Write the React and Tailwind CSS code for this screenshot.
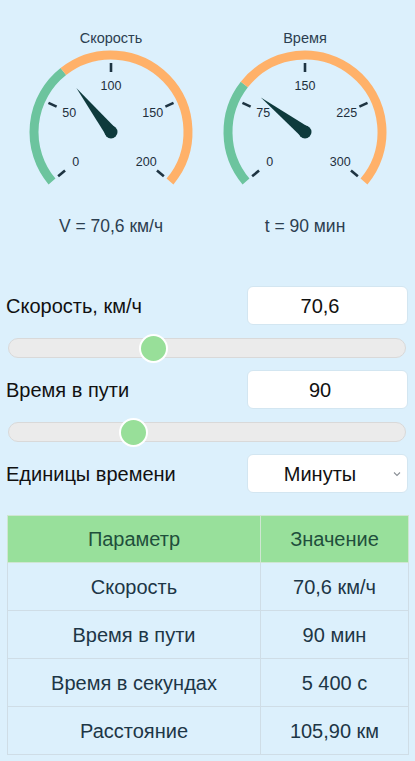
import React from 'react';

// helpers for the dial geometry (angles measured from 12 o'clock, clockwise)
const polar = (cx, cy, r, deg) => {
  const a = (deg * Math.PI) / 180;
  return [cx + r * Math.sin(a), cy - r * Math.cos(a)];
};

const arcPath = (cx, cy, r, a0, a1) => {
  const [x0, y0] = polar(cx, cy, r, a0);
  const [x1, y1] = polar(cx, cy, r, a1);
  const large = a1 - a0 > 180 ? 1 : 0;
  return `M ${x0} ${y0} A ${r} ${r} 0 ${large} 1 ${x1} ${y1}`;
};

const START = -130;
const SPAN = 260;

const Gauge = ({ title, value, max, caption }) => {
  const cx = 97;
  const cy = 86;
  const angle = START + (Math.min(value, max) / max) * SPAN;
  const ticks = [0, 1, 2, 3, 4].map((i) => (max / 4) * i);

  const [tx, ty] = polar(cx, cy, 56, angle);
  const [b1x, b1y] = polar(cx, cy, 6, angle - 90);
  const [b2x, b2y] = polar(cx, cy, 6, angle + 90);

  return (
    <div className="w-[194px] flex flex-col items-center">
      <div className="h-[16px] leading-[16px] text-[14.5px] text-[#2c3e50]">{title}</div>
      <svg width="194" height="170" viewBox="0 0 194 170">
        <path d={arcPath(cx, cy, 77, START, angle)} fill="none" stroke="#6cc49e" strokeWidth="9" />
        <path d={arcPath(cx, cy, 77, angle, START + SPAN)} fill="none" stroke="#ffb169" strokeWidth="9" />
        {ticks.map((t) => {
          const a = START + (t / max) * SPAN;
          const [x0, y0] = polar(cx, cy, 60, a);
          const [x1, y1] = polar(cx, cy, 69, a);
          const [lx, ly] = polar(cx, cy, 46, a);
          return (
            <g key={t}>
              <line x1={x0} y1={y0} x2={x1} y2={y1} stroke="#1e3442" strokeWidth="2.6" />
              <text
                x={lx}
                y={ly + 4.3}
                textAnchor="middle"
                fontSize="12.5"
                fill="#1e2f3c"
                fontFamily="'Liberation Sans', Arial, sans-serif"
              >
                {t}
              </text>
            </g>
          );
        })}
        <polygon points={`${tx},${ty} ${b1x},${b1y} ${b2x},${b2y}`} fill="#0e3a3c" />
        <circle cx={cx} cy={cy} r="6.5" fill="#0e3a3c" />
      </svg>
      <div className="h-[20px] leading-[20px] text-[17.5px] text-[#2c3e50]">{caption}</div>
    </div>
  );
};

const Slider = ({ value, min = 0, max }) => {
  const frac = (value - min) / (max - min);
  return (
    <div className="relative h-[20px] mx-[2px] rounded-full bg-[#ebebeb] border border-[#d9d9d9]">
      <div
        className="absolute top-1/2 w-[29px] h-[29px] -mt-[14.5px] -ml-[14.5px] rounded-full bg-[#98df99] border-2 border-white"
        style={{ left: `calc(14.5px + (100% - 29px) * ${frac})` }}
      />
    </div>
  );
};

const FieldRow = ({ label, children }) => (
  <div className="flex items-center justify-between">
    <span className="text-[20px] text-[#111]">{label}</span>
    {children}
  </div>
);

const rows = [
  ['Скорость', '70,6 км/ч'],
  ['Время в пути', '90 мин'],
  ['Время в секундах', '5 400 с'],
  ['Расстояние', '105,90 км'],
];

export default function App() {
  return (
    <div
      className="min-h-screen bg-[#dcf0fc] pb-[7px]"
      style={{ fontFamily: "'Liberation Sans', Arial, sans-serif" }}
    >
      {/* Dials */}
      <div className="flex pt-[30px] pl-[14px]">
        <Gauge title="Скорость" value={70.6} max={200} caption="V = 70,6 км/ч" />
        <Gauge title="Время" value={90} max={300} caption="t = 90 мин" />
      </div>

      {/* Controls */}
      <div className="mt-[50px] pl-[6px] pr-[7px]">
        <FieldRow label="Скорость, км/ч">
          <div className="w-[161px] h-[39px] flex items-center justify-center pr-[15px] rounded-[6px] bg-white border border-[#d3e6f1] text-[20px] text-[#111]">
            70,6
          </div>
        </FieldRow>
        <div className="mt-[13px]">
          <Slider value={70.6} max={200} />
        </div>
        <div className="mt-[12px]">
          <FieldRow label="Время в пути">
            <div className="w-[161px] h-[39px] flex items-center justify-center pr-[15px] rounded-[6px] bg-white border border-[#d3e6f1] text-[20px] text-[#111]">
              90
            </div>
          </FieldRow>
        </div>
        <div className="mt-[13px]">
          <Slider value={90} max={300} />
        </div>
        <div className="mt-[12px]">
          <FieldRow label="Единицы времени">
            <div className="relative w-[161px] h-[39px] flex items-center justify-center pr-[15px] rounded-[6px] bg-white border border-[#d3e6f1] text-[20px] text-[#111]">
              Минуты
              <svg
                className="absolute right-[6px] top-1/2 -mt-[3px]"
                width="8"
                height="6"
                viewBox="0 0 8 6"
              >
                <path d="M1 1.5 L4 4.5 L7 1.5" fill="none" stroke="#8a8f96" strokeWidth="1.1" />
              </svg>
            </div>
          </FieldRow>
        </div>

        {/* Results table */}
        <table className="mt-[22px] ml-[1px] w-[401px] border-collapse text-[20px] table-fixed">
          <colgroup>
            <col className="w-[253px]" />
            <col className="w-[148px]" />
          </colgroup>
          <thead>
            <tr className="bg-[#98e09b] h-[47px]">
              <th className="font-normal text-[#1f4f3c] border border-[#cfe6d2]">Параметр</th>
              <th className="font-normal text-[#1f4f3c] border border-[#cfe6d2]">Значение</th>
            </tr>
          </thead>
          <tbody>
            {rows.map(([k, v]) => (
              <tr key={k} className="h-[48px]">
                <td className="text-center text-[#1d3646] border border-[#cfdde6]">{k}</td>
                <td className="text-center text-[#1d3646] border border-[#cfdde6]">{v}</td>
              </tr>
            ))}
          </tbody>
        </table>
      </div>
    </div>
  );
}
